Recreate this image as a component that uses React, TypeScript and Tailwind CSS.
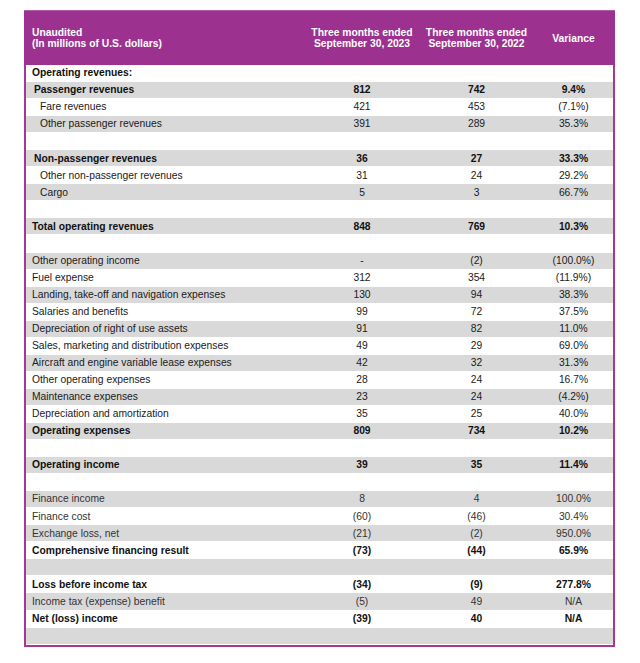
type Row = {
  label?: string;
  a?: string;
  b?: string;
  v?: string;
  bold?: boolean;
  indent?: 0 | 1 | 2;
  gray?: boolean;
  muted?: boolean;
};

const rows: Row[] = [
  { label: "Operating revenues:", bold: true },
  { label: "Passenger revenues", a: "812", b: "742", v: "9.4%", bold: true, indent: 1, gray: true },
  { label: "Fare revenues", a: "421", b: "453", v: "(7.1%)", indent: 2 },
  { label: "Other passenger revenues", a: "391", b: "289", v: "35.3%", indent: 2, gray: true },
  {},
  { label: "Non-passenger revenues", a: "36", b: "27", v: "33.3%", bold: true, indent: 1, gray: true },
  { label: "Other non-passenger revenues", a: "31", b: "24", v: "29.2%", indent: 2 },
  { label: "Cargo", a: "5", b: "3", v: "66.7%", indent: 2, gray: true },
  {},
  { label: "Total operating revenues", a: "848", b: "769", v: "10.3%", bold: true, gray: true },
  {},
  { label: "Other operating income", a: "-", b: "(2)", v: "(100.0%)", gray: true },
  { label: "Fuel expense", a: "312", b: "354", v: "(11.9%)" },
  { label: "Landing, take-off and navigation expenses", a: "130", b: "94", v: "38.3%", gray: true },
  { label: "Salaries and benefits", a: "99", b: "72", v: "37.5%" },
  { label: "Depreciation of right of use assets", a: "91", b: "82", v: "11.0%", gray: true },
  { label: "Sales, marketing and distribution expenses", a: "49", b: "29", v: "69.0%" },
  { label: "Aircraft and engine variable lease expenses", a: "42", b: "32", v: "31.3%", gray: true },
  { label: "Other operating expenses", a: "28", b: "24", v: "16.7%" },
  { label: "Maintenance expenses", a: "23", b: "24", v: "(4.2%)", gray: true },
  { label: "Depreciation and amortization", a: "35", b: "25", v: "40.0%" },
  { label: "Operating expenses", a: "809", b: "734", v: "10.2%", bold: true, gray: true },
  {},
  { label: "Operating income", a: "39", b: "35", v: "11.4%", bold: true, gray: true },
  {},
  { label: "Finance income", a: "8", b: "4", v: "100.0%", gray: true, muted: true },
  { label: "Finance cost", a: "(60)", b: "(46)", v: "30.4%", muted: true },
  { label: "Exchange loss, net", a: "(21)", b: "(2)", v: "950.0%", gray: true, muted: true },
  { label: "Comprehensive financing result", a: "(73)", b: "(44)", v: "65.9%", bold: true },
  { gray: true },
  { label: "Loss before income tax", a: "(34)", b: "(9)", v: "277.8%", bold: true },
  { label: "Income tax (expense) benefit", a: "(5)", b: "49", v: "N/A", gray: true, muted: true },
  { label: "Net (loss) income", a: "(39)", b: "40", v: "N/A", bold: true },
  { gray: true },
];

export default function App() {
  return (
    <div className="min-h-[663px] w-[640px] bg-white pt-[10px] pl-[24px] font-['Liberation_Sans',Arial,sans-serif] text-[10.3px]">
      <div className="w-[591px] border-2 border-t-0 border-[#a4379a]">
        {/* HEADER */}
        <div className="-mx-[2px] flex h-[55px] items-center border-t border-[#b45aab] bg-[#9c3190] px-[2px] font-bold leading-[11px] text-white">
          <div className="w-[279px] pl-[6px]">
            <div>Unaudited</div>
            <div>(In millions of U.S. dollars)</div>
          </div>
          <div className="w-[114px] text-center">
            Three months ended
            <br />
            September 30, 2023
          </div>
          <div className="w-[115px] text-center">
            Three months ended
            <br />
            September 30, 2022
          </div>
          <div className="w-[79px] text-center">Variance</div>
        </div>
        {rows.map((r, i) => (
          <div
            key={i}
            className={`flex h-[17.05px] items-center border-b border-white ${r.gray ? "bg-[#d9d9d9]" : "bg-white"} ${r.bold ? "font-bold text-[#111]" : r.muted ? "text-[#333]" : "text-[#1a1a1a]"}`}
          >
            <div
              className={`w-[279px] ${r.indent === 2 ? "pl-[14px]" : r.indent === 1 ? "pl-[8px]" : "pl-[6px]"}`}
            >
              {r.label}
            </div>
            <div className="w-[114px] text-center">{r.a}</div>
            <div className="w-[115px] text-center">{r.b}</div>
            <div className="w-[79px] text-center">{r.v}</div>
          </div>
        ))}
      </div>
    </div>
  );
}
